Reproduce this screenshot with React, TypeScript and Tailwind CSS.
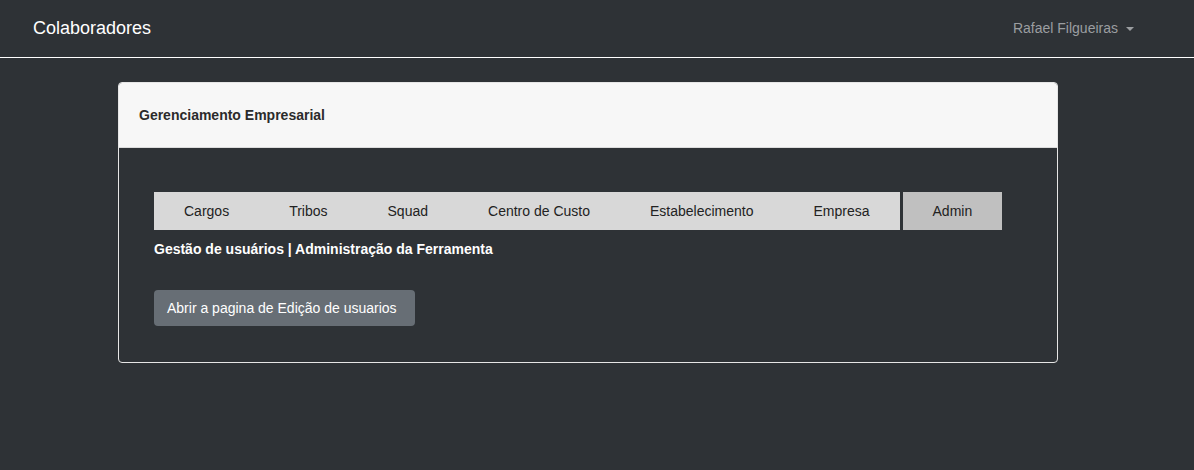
export default function App() {
  const tabs = ["Cargos", "Tribos", "Squad", "Centro de Custo", "Estabelecimento", "Empresa"];

  return (
    <div
      className="min-h-[470px] bg-[#2e3236] text-white"
      style={{ fontFamily: "'Liberation Sans', Arial, sans-serif" }}
    >
      {/* Navbar */}
      <nav className="h-[58px] flex items-center justify-between pl-[33px] pr-[60px] border-b border-white">
        <span className="text-[18px] text-white">Colaboradores</span>
        <button className="flex items-center gap-[8px] text-[14px] text-[#9b9ea1]">
          Rafael Filgueiras
          <span className="w-0 h-0 border-l-[4px] border-r-[4px] border-t-[4px] border-l-transparent border-r-transparent border-t-[#9b9ea1]" />
        </button>
      </nav>

      {/* Card */}
      <div className="pt-[24px] pl-[118px]">
        <div className="w-[940px] border border-[#e6e6e6] rounded-[4px] overflow-hidden">
          <div className="h-[65px] bg-[#f7f7f7] border-b border-[#dcdcdc] flex items-center px-[20px]">
            <h2 className="text-[14px] font-bold text-[#2b2b2b]">Gerenciamento Empresarial</h2>
          </div>
          <div className="px-[35px] pt-[44px] pb-[36px]">
            <div className="flex">
              <div className="flex bg-[#d8d8d8]">
                {tabs.map((t) => (
                  <button key={t} className="h-[38px] px-[30px] text-[14px] text-[#222]">
                    {t}
                  </button>
                ))}
              </div>
              <button className="ml-[3px] h-[38px] px-[30px] bg-[#c0c0c0] text-[14px] text-[#222]">
                Admin
              </button>
            </div>
            <p className="mt-[9px] text-[14px] font-bold text-white">
              Gestão de usuários | Administração da Ferramenta
            </p>
            <button className="mt-[30px] h-[36px] pl-[13px] pr-[18px] rounded-[4px] bg-[#676e75] text-[14px] text-white">
              Abrir a pagina de Edição de usuarios
            </button>
          </div>
        </div>
      </div>
    </div>
  );
}
